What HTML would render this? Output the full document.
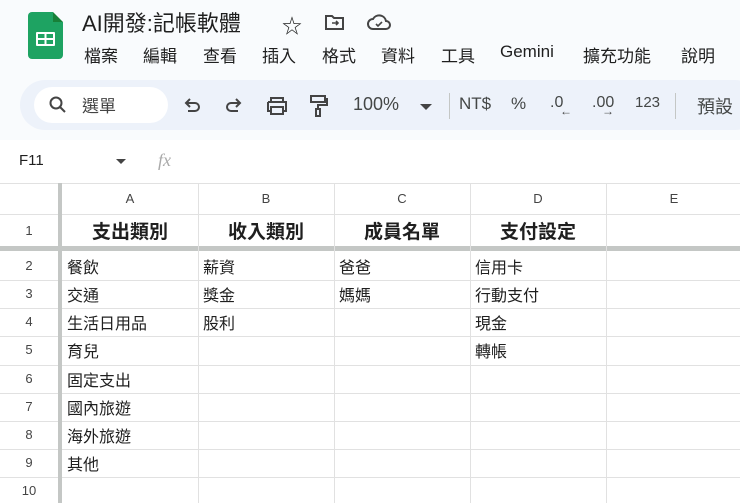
<!DOCTYPE html>
<html><head><meta charset="utf-8"><style>
*{margin:0;padding:0;box-sizing:border-box}
body{width:740px;height:503px;overflow:hidden;background:#f9fbfd;font-family:"Liberation Sans","Noto Sans CJK TC",sans-serif;color:#1f1f1f;position:relative}
.a{position:absolute;white-space:nowrap}
.logo{left:28px;top:12px;width:35px;height:47px;background:#1ea362;border-radius:4px}
.logo:after{content:"";position:absolute;right:0;top:0;border-top:10px solid #f9fbfd;border-left:10px solid #188038}
.title{left:82px;top:6px;font-size:22px;color:#1f1f1f}
.menu{top:42px;font-size:17px;color:#1f1f1f}
.tb{left:20px;top:80px;width:740px;height:50px;background:#edf2fa;border-radius:25px}
.search{left:34px;top:87px;width:134px;height:36px;background:#fff;border-radius:18px}
.tt{top:94px;font-size:17px;color:#444746}
.fx{top:140px;left:0;width:740px;height:43px;background:#fff}
.grid{left:0;top:183px;width:740px;height:320px;background:#fff}
.hl{position:absolute;left:0;width:740px;height:1px;background:#e1e1e1}
.vl{position:absolute;top:183px;height:320px;width:1px;background:#e1e1e1}
.c{position:absolute;font-size:16px;white-space:nowrap}
.rh{position:absolute;left:0;width:58px;text-align:center;font-size:13px;color:#444}
.ch{position:absolute;top:191px;text-align:center;font-size:13px;color:#444;width:136px}
.bh{position:absolute;top:217px;text-align:center;font-size:19px;font-weight:bold;width:136px}
</style></head><body>
<div class="a logo"><svg width="35" height="47" style="position:absolute;left:0;top:0"><rect x="8" y="20" width="19" height="14" fill="#fff" rx="1"/><rect x="10" y="22" width="6.5" height="4" fill="#1ea362"/><rect x="18.5" y="22" width="6.5" height="4" fill="#1ea362"/><rect x="10" y="28" width="6.5" height="4" fill="#1ea362"/><rect x="18.5" y="28" width="6.5" height="4" fill="#1ea362"/></svg></div>
<div class="a title">AI開發:記帳軟體</div>
<div class="a" style="left:282px;top:10px;font-size:20px">☆</div>
<svg class="a" style="left:324px;top:13px" width="22" height="18"><path d="M2 3h6l2 2h9v11H2z" fill="none" stroke="#444" stroke-width="2"/><path d="M8 10h6M12 8l2 2-2 2" fill="none" stroke="#444" stroke-width="1.6"/></svg>
<svg class="a" style="left:366px;top:13px" width="26" height="18"><path d="M7 16a5 5 0 0 1 0-10 7 7 0 0 1 13 2 4 4 0 0 1 0 8z" fill="none" stroke="#444" stroke-width="2"/><path d="M10 11l2 2 4-4" fill="none" stroke="#444" stroke-width="1.6"/></svg>
<div class="a menu" style="left:84px">檔案</div><div class="a menu" style="left:143px">編輯</div><div class="a menu" style="left:203px">查看</div><div class="a menu" style="left:262px">插入</div><div class="a menu" style="left:322px">格式</div><div class="a menu" style="left:381px">資料</div><div class="a menu" style="left:441px">工具</div><div class="a menu" style="left:500px">Gemini</div><div class="a menu" style="left:583px">擴充功能</div><div class="a menu" style="left:681px">說明</div>
<div class="a tb"></div><div class="a search"></div>
<svg class="a" style="left:48px;top:95px" width="20" height="20"><circle cx="8" cy="8" r="5.5" fill="none" stroke="#444" stroke-width="2"/><path d="M12 12l5 5" stroke="#444" stroke-width="2"/></svg>
<div class="a tt" style="left:82px;top:92px;color:#444">選單</div>
<svg class="a" style="left:182px;top:97px" width="20" height="18"><path d="M5 6h8a4 4 0 0 1 0 8H6" fill="none" stroke="#444" stroke-width="2"/><path d="M8 2L4 6l4 4" fill="none" stroke="#444" stroke-width="2"/></svg>
<svg class="a" style="left:224px;top:97px" width="20" height="18"><path d="M15 6H7a4 4 0 0 0 0 8h7" fill="none" stroke="#444" stroke-width="2"/><path d="M12 2l4 4-4 4" fill="none" stroke="#444" stroke-width="2"/></svg>
<svg class="a" style="left:265px;top:96px" width="24" height="20"><path d="M6 6V2h12v4M3 6h18v9h-3M6 15H3V6M6 11h12v7H6z" fill="none" stroke="#444" stroke-width="2"/></svg>
<svg class="a" style="left:308px;top:94px" width="22" height="24"><path d="M3 2h14v6H3zM17 5h2v6h-9v4M8 15h4v7H8z" fill="none" stroke="#444" stroke-width="2"/></svg>
<div class="a tt" style="left:353px;font-size:18px">100%</div>
<div class="a" style="left:420px;top:104px;border-left:6px solid transparent;border-right:6px solid transparent;border-top:6px solid #444"></div>
<div class="a" style="left:449px;top:93px;width:1px;height:26px;background:#c4c7c5"></div>
<div class="a tt" style="left:459px">NT$</div>
<div class="a tt" style="left:511px">%</div>
<div class="a tt" style="left:550px;font-size:16px">.0</div><div class="a" style="left:560px;top:104px;font-size:12px;color:#444">←</div>
<div class="a tt" style="left:592px;font-size:16px">.00</div><div class="a" style="left:602px;top:104px;font-size:12px;color:#444">→</div>
<div class="a tt" style="left:635px;font-size:15px">123</div>
<div class="a" style="left:675px;top:93px;width:1px;height:26px;background:#c4c7c5"></div>
<div class="a tt" style="left:697px;font-size:18px;top:93px">預設</div>
<div class="a fx"></div>
<div class="a" style="left:19px;top:152px;font-size:15px">F11</div>
<div class="a" style="left:116px;top:159px;border-left:5px solid transparent;border-right:5px solid transparent;border-top:5px solid #444"></div>
<div class="a" style="left:158px;top:150px;font-size:18px;font-style:italic;color:#aaa;font-family:'Liberation Serif',serif">fx</div>
<div class="a grid"></div>
<div class="hl" style="top:183px"></div><div class="hl" style="top:214px"></div>
<div class="hl" style="top:246px;height:5px;background:#c4c7c5"></div>
<div class="hl" style="top:280px"></div><div class="hl" style="top:308px"></div><div class="hl" style="top:336px"></div><div class="hl" style="top:365px"></div><div class="hl" style="top:393px"></div><div class="hl" style="top:421px"></div><div class="hl" style="top:449px"></div><div class="hl" style="top:477px"></div>
<div class="vl" style="left:58px;width:4px;background:#c4c7c5"></div>
<div class="vl" style="left:198px"></div><div class="vl" style="left:334px"></div><div class="vl" style="left:470px"></div><div class="vl" style="left:606px"></div>
<div class="ch" style="left:62px">A</div><div class="ch" style="left:198px">B</div><div class="ch" style="left:334px">C</div><div class="ch" style="left:470px">D</div><div class="ch" style="left:606px">E</div>
<div class="bh" style="left:62px">支出類別</div><div class="bh" style="left:198px">收入類別</div><div class="bh" style="left:334px">成員名單</div><div class="bh" style="left:470px">支付設定</div>
<div class="rh" style="top:223px">1</div><div class="rh" style="top:258px">2</div><div class="rh" style="top:286px">3</div><div class="rh" style="top:314px">4</div><div class="rh" style="top:342px">5</div><div class="rh" style="top:371px">6</div><div class="rh" style="top:399px">7</div><div class="rh" style="top:427px">8</div><div class="rh" style="top:455px">9</div><div class="rh" style="top:483px">10</div>
<div class="c" style="left:67px;top:254px">餐飲</div><div class="c" style="left:203px;top:254px">薪資</div><div class="c" style="left:339px;top:254px">爸爸</div><div class="c" style="left:475px;top:254px">信用卡</div>
<div class="c" style="left:67px;top:282px">交通</div><div class="c" style="left:203px;top:282px">獎金</div><div class="c" style="left:339px;top:282px">媽媽</div><div class="c" style="left:475px;top:282px">行動支付</div>
<div class="c" style="left:67px;top:310px">生活日用品</div><div class="c" style="left:203px;top:310px">股利</div><div class="c" style="left:475px;top:310px">現金</div>
<div class="c" style="left:67px;top:338px">育兒</div><div class="c" style="left:475px;top:338px">轉帳</div>
<div class="c" style="left:67px;top:367px">固定支出</div>
<div class="c" style="left:67px;top:395px">國內旅遊</div>
<div class="c" style="left:67px;top:423px">海外旅遊</div>
<div class="c" style="left:67px;top:451px">其他</div>
</body></html>
